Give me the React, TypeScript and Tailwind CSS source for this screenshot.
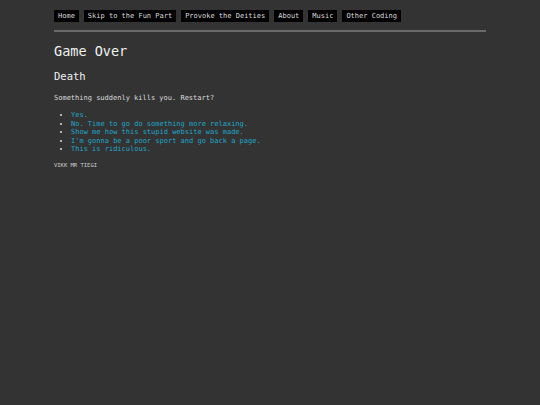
const NAV = ['Home', 'Skip to the Fun Part', 'Provoke the Deities', 'About', 'Music', 'Other Coding'];

const CHOICES = [
  'Yes.',
  'No. Time to go do something more relaxing.',
  "Show me how this stupid website was made.",
  "I'm gonna be a poor sport and go back a page.",
  'This is ridiculous.',
];

export default function App() {
  return (
    <div
      className="min-h-[405px] w-full bg-[#333333] text-[#dcdcdc]"
      style={{ fontFamily: '"DejaVu Sans Mono", "Liberation Mono", monospace' }}
    >
      <div className="mx-auto w-[432px] pt-[10px]">
        <nav className="flex gap-[5px]">
          {NAV.map((n) => (
            <a
              key={n}
              href="#"
              className="block h-[12px] bg-black px-[4px] text-[7px] leading-[12px] text-[#dcdcdc]"
            >
              {n}
            </a>
          ))}
        </nav>
        <div className="mt-[8px] h-[2px] bg-[#6a6a6a]" />

        <h1 className="mt-[10px] text-[13.5px] font-normal leading-[18px] text-[#f0f0f0]">Game Over</h1>
        <h2 className="mt-[9px] text-[10.5px] font-normal leading-[14px] text-[#f0f0f0]">Death</h2>

        <p className="mt-[11px] text-[7px] leading-[9px]">Something suddenly kills you. Restart?</p>

        <ul className="mt-[8px] list-disc pl-[17px] text-[7px] leading-[8.5px] marker:text-[#dcdcdc]">
          {CHOICES.map((c) => (
            <li key={c}>
              <a href="#" className="text-[#21a6c8]">{c}</a>
            </li>
          ))}
        </ul>

        <p className="mt-[8px] text-[5.5px] leading-[7px] text-[#cfcfcf]">VIKK MR TIEGI</p>
      </div>
    </div>
  );
}
